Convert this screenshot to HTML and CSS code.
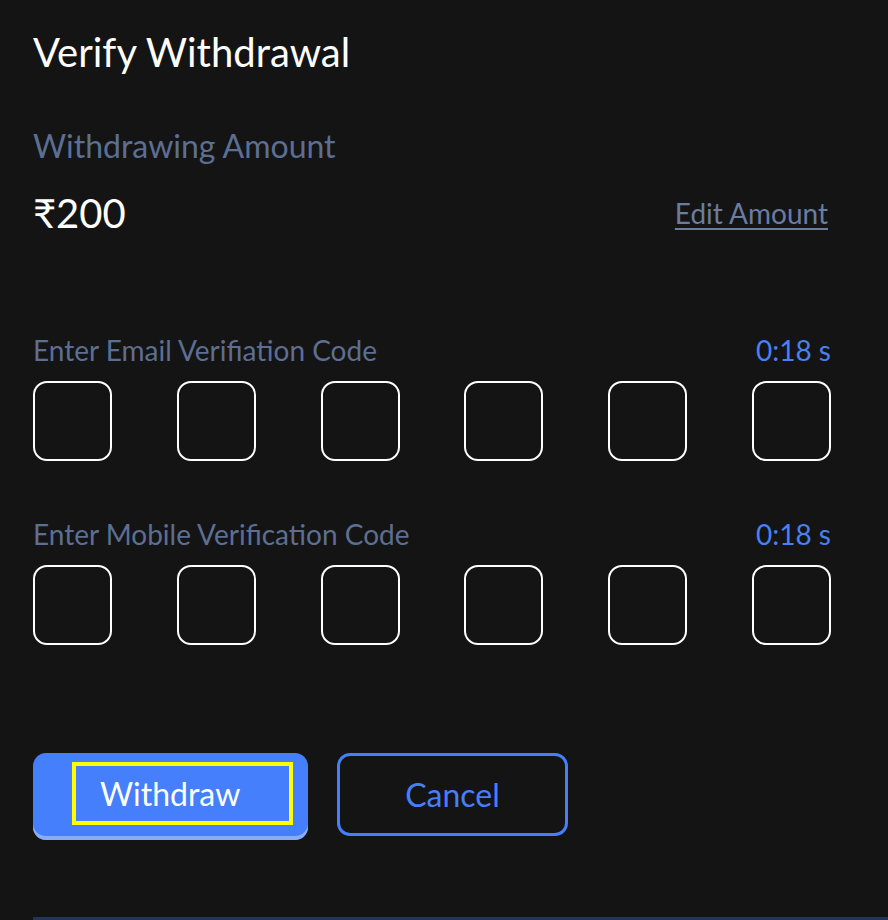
FILE: index.html
```html
<!DOCTYPE html>
<html>
<head>
<meta charset="utf-8">
<link rel="stylesheet" href="styles.css">
</head>
<body>
<div class="page">
  <div class="panel">
    <h1 class="title">Verify Withdrawal</h1>
    <div class="label amount-label">Withdrawing Amount</div>
    <div class="amount-row">
      <div class="amount">₹200</div>
      <a class="edit" href="#">Edit Amount</a>
    </div>

    <div class="code-block email">
      <div class="code-head">
        <span class="label">Enter Email Verifiation Code</span>
        <span class="timer">0:18 s</span>
      </div>
      <div class="boxes">
        <div class="box"></div><div class="box"></div><div class="box"></div>
        <div class="box"></div><div class="box"></div><div class="box"></div>
      </div>
    </div>

    <div class="code-block mobile">
      <div class="code-head">
        <span class="label">Enter Mobile Verification Code</span>
        <span class="timer">0:18 s</span>
      </div>
      <div class="boxes">
        <div class="box"></div><div class="box"></div><div class="box"></div>
        <div class="box"></div><div class="box"></div><div class="box"></div>
      </div>
    </div>

    <div class="actions">
      <button class="btn primary"><span class="focus">Withdraw</span></button>
      <button class="btn outline">Cancel</button>
    </div>
  </div>
</div>
</body>
</html>
```

FILE: styles.css
```css
* { box-sizing: border-box; }
html, body {
  margin: 0;
  padding: 0;
  background: #141414;
}
body {
  font-family: Lato, "Open Sans", sans-serif;
  color: #ffffff;
  width: 888px;
  height: 920px;
  overflow: hidden;
}
.page {
  padding-left: 33px;
}
.panel {
  width: 855px;
  height: 920px;
  padding-right: 57px;
  border-bottom: 3px solid #23335a;
}
.title {
  margin: 0;
  padding-top: 28px;
  font-size: 40px;
  font-weight: 400;
  line-height: 48px;
}
.label {
  color: #5c6f93;
  font-size: 32px;
  line-height: 38px;
}
.amount-label {
  margin-top: 51px;
}
.amount-row {
  display: flex;
  justify-content: space-between;
  align-items: center;
  margin-top: 24px;
  padding-right: 3px;
}
.amount {
  font-size: 40px;
  line-height: 48px;
}
.edit {
  color: #6a7da0;
  font-size: 28px;
  line-height: 34px;
  text-decoration: underline;
  text-underline-offset: 4px;
  text-decoration-thickness: 2px;
}
.code-block.email { margin-top: 96px; }
.code-block.mobile { margin-top: 56px; }
.code-head {
  display: flex;
  justify-content: space-between;
  align-items: baseline;
}
.code-head .label {
  font-size: 28px;
  line-height: 34px;
}
.timer {
  color: #4a80f0;
  font-size: 28px;
  line-height: 34px;
}
.boxes {
  display: flex;
  justify-content: space-between;
  margin-top: 14px;
}
.box {
  width: 79px;
  height: 80px;
  border: 2px solid #ffffff;
  border-radius: 14px;
}
.actions {
  display: flex;
  gap: 29px;
  margin-top: 108px;
}
.btn {
  font-family: Lato, "Open Sans", sans-serif;
  font-size: 32px;
  border-radius: 13px;
  cursor: pointer;
  margin: 0;
}
.btn.primary {
  width: 275px;
  height: 87px;
  background: #467ffb;
  border: none;
  box-shadow: inset 0 -4px 0 #89acf6;
  padding: 9px 0 0 39px;
  display: flex;
  align-items: flex-start;
}
.focus {
  display: flex;
  align-items: center;
  width: 221px;
  height: 63px;
  border: 4px solid #ffff00;
  color: #ffffff;
  padding-left: 24px;
}
.btn.outline {
  width: 231px;
  height: 83px;
  background: transparent;
  border: 3px solid #467ffb;
  color: #467ffb;
}
```
